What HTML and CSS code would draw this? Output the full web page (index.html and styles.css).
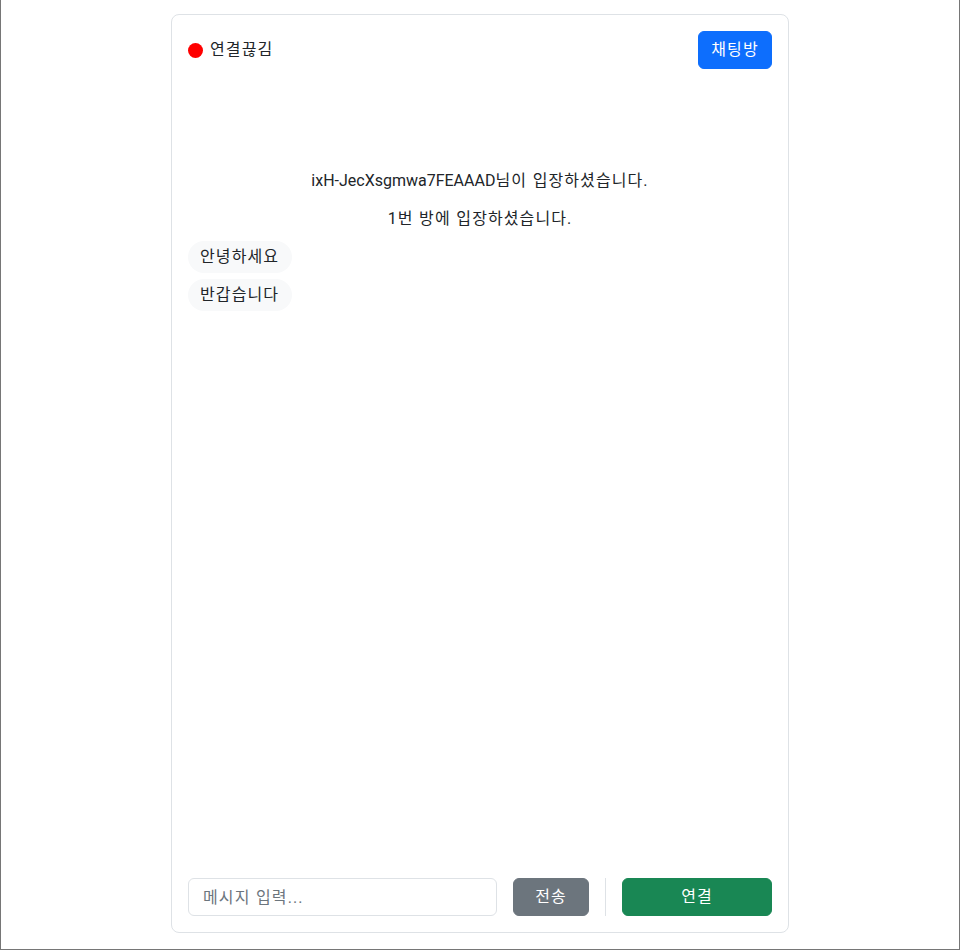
FILE: index.html
```html
<!DOCTYPE html>
<html lang="ko">
<head>
<meta charset="utf-8">
<title>채팅</title>
<link rel="stylesheet" href="styles.css">
</head>
<body>
<div class="frame">
  <div class="card">
    <div class="header">
      <div class="status">
        <span class="dot"></span>
        <span class="status-text ko">연결끊김</span>
      </div>
      <button class="btn btn-primary ko">채팅방</button>
    </div>
    <div class="messages">
      <div class="system">ixH-JecXsgmwa7FEAAAD<span class="ko">님이 입장하셨습니다.</span></div>
      <div class="system ko">1번 방에 입장하셨습니다.</div>
      <div class="bubble ko">안녕하세요</div>
      <div class="bubble ko">반갑습니다</div>
    </div>
    <div class="composer">
      <input class="input ko" type="text" placeholder="메시지 입력...">
      <button class="btn btn-secondary ko">전송</button>
      <span class="divider"></span>
      <button class="btn btn-success ko">연결</button>
    </div>
  </div>
</div>
</body>
</html>
```
FILE: styles.css
```css
* { box-sizing: border-box; }
html, body { margin: 0; padding: 0; background: #fff; }
body {
  font-family: "Segoe UI", Roboto, "Noto Sans CJK KR", sans-serif;
  font-size: 16px;
  line-height: 24px;
  color: #212529;
}
.ko {
  letter-spacing: 1.1px;
  word-spacing: 0.5px;
}
.frame {
  height: 950px;
  border: 1px solid #767676;
  border-top: none;
  padding-top: 14px;
}
.card {
  width: 618px;
  height: 919px;
  margin: 0 auto;
  border: 1px solid #dee2e6;
  border-radius: 8px;
  padding: 16px;
  display: flex;
  flex-direction: column;
}
.header {
  display: flex;
  justify-content: space-between;
  align-items: center;
}
.status {
  display: flex;
  align-items: center;
  gap: 7px;
}
.dot {
  width: 15px;
  height: 15px;
  border-radius: 50%;
  background: #ff0000;
}
.btn {
  font-family: inherit;
  font-size: 16px;
  line-height: 24px;
  height: 38px;
  padding: 6px 12px;
  border: 1px solid transparent;
  border-radius: 6px;
  color: #fff;
  cursor: pointer;
}
.btn-primary { background: #0d6efd; border-color: #0d6efd; width: 74px; }
.btn-secondary { background: #6c757d; border-color: #6c757d; width: 76px; }
.btn-success { background: #198754; border-color: #198754; width: 150px; }
.messages {
  flex: 1;
  display: flex;
  flex-direction: column;
  align-items: flex-start;
  gap: 6px;
  padding-top: 96px;
}
.system {
  align-self: stretch;
  text-align: center;
  padding: 4px 0;
}
.bubble {
  background: #f8f9fa;
  border-radius: 16px;
  padding: 4px 13px 4px 12px;
}
.composer {
  display: flex;
  align-items: center;
  gap: 16px;
}
.input {
  flex: 1;
  min-width: 0;
  height: 38px;
  font-family: inherit;
  font-size: 16px;
  padding: 6px 14px;
  border: 1px solid #dee2e6;
  border-radius: 6px;
  color: #212529;
}
.input::placeholder { color: #6c757d; }
.divider {
  width: 1px;
  height: 38px;
  background: #dee2e6;
}
```
